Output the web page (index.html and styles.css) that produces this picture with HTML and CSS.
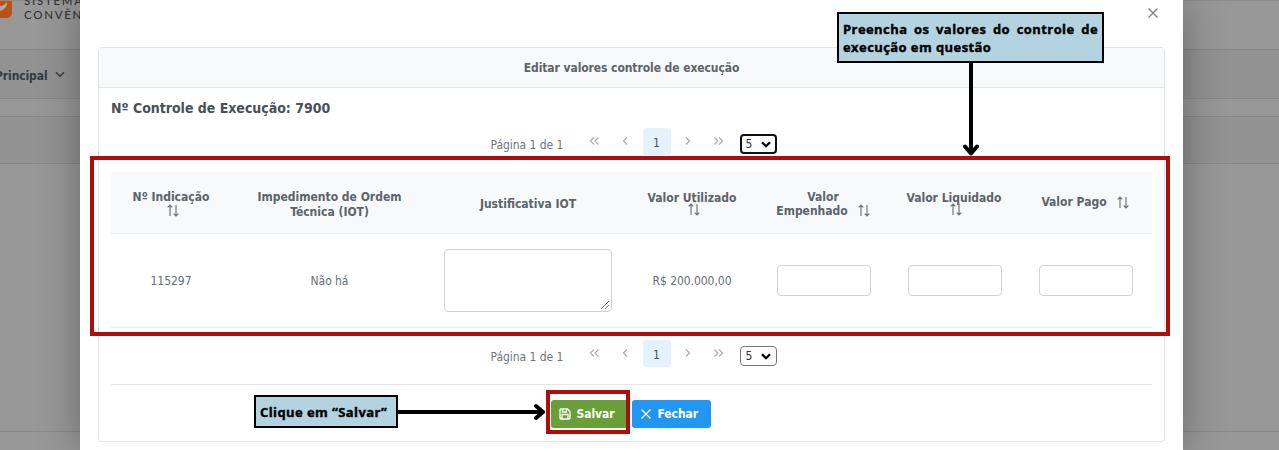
FILE: index.html
```html
<!DOCTYPE html>
<html lang="pt-BR">
<head>
<meta charset="utf-8">
<title>Editar valores controle de execução</title>
<link rel="stylesheet" href="styles.css">
</head>
<body>
<svg class="defs" aria-hidden="true">
  <symbol id="sort" viewBox="0 0 12 13"><path d="M3 12V1M.7 3.3 3 1l2.3 2.3M9 1v11M6.7 9.7 9 12l2.3-2.3"/></symbol>
  <symbol id="left" viewBox="0 0 6 8"><path d="M5 .5 1.500 4 5 7.500"/></symbol>
  <symbol id="right" viewBox="0 0 6 8"><path d="M1 .5 4.500 4 1 7.500"/></symbol>
  <symbol id="first" viewBox="0 0 11 8"><path d="M5 .5 1.500 4 5 7.500M9.500 .5 6 4l3.500 3.500"/></symbol>
  <symbol id="last" viewBox="0 0 11 8"><path d="M1.500 .5 5 4 1.500 7.500M6 .5 9.500 4 6 7.500"/></symbol>
  <symbol id="caret" viewBox="0 0 10 7"><path d="m1 1.300 4 4 4-4"/></symbol>
  <symbol id="cross" viewBox="0 0 12 12"><path d="m1.500 1.500 9 9m0-9-9 9"/></symbol>
</svg>

<div class="page">
  <header class="brand">
    <svg class="logo" viewBox="0 0 12 19"><path fill="#bd5014" d="M0 0h12v12a5 5 0 0 1-5 5H0z"/><path fill="#aaa" d="M0 5C3 5 5 3 7 1c1 4-3 8-7 9z"/></svg>
    <div class="brand-name"><div>SISTEMA</div><div>CONVÊNIOS</div></div>
  </header>
  <nav class="menubar"><span class="menu-label">Principal</span><svg class="menu-caret"><use href="#caret"/></svg></nav>
  <section class="panel"><div class="panel-head"></div><div class="panel-body"></div></section>
</div>

<main class="dialog">
  <div class="dialog-top"><svg class="close"><use href="#cross"/></svg></div>
  <section class="card">
    <h1 class="card-head">Editar valores controle de execução</h1>
    <div class="card-body">
      <h2 class="control">Nº Controle de Execução: 7900</h2>
      <div class="pager">
        <span class="pages">Página 1 de 1</span>
        <svg class="double"><use href="#first"/></svg><svg class="single prev"><use href="#left"/></svg>
        <span class="current">1</span>
        <svg class="single next"><use href="#right"/></svg><svg class="double"><use href="#last"/></svg>
        <span class="size focused">5<svg><use href="#caret"/></svg></span>
      </div>
      <div class="row head">
        <div class="th">Nº Indicação<svg class="sort under"><use href="#sort"/></svg></div>
        <div class="th two">Impedimento de Ordem<br>Técnica (IOT)</div>
        <div class="th just">Justificativa IOT</div>
        <div class="th">Valor Utilizado<svg class="sort under tight"><use href="#sort"/></svg></div>
        <div class="th stacked"><div>Valor</div><div class="beside"><span>Empenhado</span><svg class="sort"><use href="#sort"/></svg></div></div>
        <div class="th">Valor Liquidado<svg class="sort under tight"><use href="#sort"/></svg></div>
        <div class="th"><div class="beside pago"><span>Valor Pago</span><svg class="sort"><use href="#sort"/></svg></div></div>
      </div>
      <div class="row data">
        <div>115297</div>
        <div>Não há</div>
        <div class="area-cell"><div class="area"><svg viewBox="0 0 10 10"><path d="M1 9 9 1M5 9l4-4"/></svg></div></div>
        <div class="money">R$ 200.000,00</div>
        <div><input class="field" type="text"></div>
        <div><input class="field" type="text"></div>
        <div><input class="field" type="text"></div>
      </div>
      <div class="pager bottom">
        <span class="pages">Página 1 de 1</span>
        <svg class="double"><use href="#first"/></svg><svg class="single prev"><use href="#left"/></svg>
        <span class="current">1</span>
        <svg class="single next"><use href="#right"/></svg><svg class="double"><use href="#last"/></svg>
        <span class="size">5<svg><use href="#caret"/></svg></span>
      </div>
      <footer class="actions">
        <button class="btn save"><svg viewBox="0 0 12 12"><path d="M1 2q0-1 1-1h6.500L11 3.500V10q0 1-1 1H2q-1 0-1-1zM3.500 1v3h4V1M3 11V6.500h6V11"/></svg>Salvar</button>
        <button class="btn shut"><svg><use href="#cross"/></svg>Fechar</button>
      </footer>
    </div>
  </section>
</main>

<div class="frame frame-table"></div>
<div class="frame frame-save"></div>
<div class="note note-values"><div class="spread">Preencha os valores do controle de</div><div>execução em questão</div></div>
<div class="note note-save">Clique em “Salvar”</div>
<svg class="arrow arrow-down" viewBox="0 0 18 95"><path d="M9 0v91M3 84.500l6 7 6-7"/></svg>
<svg class="arrow arrow-right" viewBox="0 0 149 18"><path d="M0 9h145M138 3l7 6-7 6"/></svg>
</body>
</html>
```
FILE: styles.css
```css
* { box-sizing: border-box; }
html { overflow: hidden; }
body {
  margin: 0; width: 1279px; height: 450px; overflow: hidden; position: relative;
  font: 12px/15px "DejaVu Sans Condensed", "DejaVu Sans", sans-serif; font-stretch: condensed;
  letter-spacing: -.05px; color: #666d74; background: #989898;
}
svg { fill: none; stroke: currentColor; flex: none; }
.defs { display: none; }

.page { height: 450px; }
.brand { height: 49px; display: flex; border-top: 1px solid #8b8b8b; }
.logo { width: 12px; height: 19px; stroke: none; }
.brand-name { margin: -7px 0 0 12px; font: 500 11.5px/14px Lato, sans-serif; letter-spacing: 1.7px; color: #333; }
.menubar {
  height: 50px; display: flex; align-items: center; border: 1px solid #858788; border-width: 1px 0;
  background: #929292; color: #343a40; font-weight: 700; padding-top: 4px;
}
.menu-label { margin-left: -5px; width: 53px; letter-spacing: -.1px; }
.menu-caret { width: 10px; height: 7px; margin: -3px 0 0 7px; stroke-width: 1.3; }
.panel { margin-top: 17px; height: 316px; border: 1px solid #82878b; border-width: 1px 0; }
.panel-head { height: 47px; background: #929292; border-bottom: 1px solid #858788; }

.dialog {
  position: absolute; left: 80px; top: 0; width: 1103px; height: 450px; padding: 0 18px;
  background: #fff; box-shadow: 0 0 40px rgba(0,0,0,.32);
}
.dialog-top { height: 47px; display: flex; justify-content: flex-end; padding: 7px 6px 0 0; color: #7b848d; }
.close { width: 12px; height: 12px; stroke-width: 1.4; }
.card { height: 395px; border: 1px solid #e1e6ea; border-radius: 4px; }
.card-head {
  margin: 0; height: 40px; padding-top: 2px; display: flex; align-items: center; justify-content: center;
  background: #f8f9fa; border-bottom: 1px solid #e1e6ea; font-size: 12px; font-weight: 700; letter-spacing: -.08px; color: #5c6369;
}
.card-body { padding: 11px 12px 0 12px; }
.control { margin: 0; height: 29px; font-size: 14px; line-height: 18px; font-weight: 700; letter-spacing: -.02px; color: #495057; }

.pager { height: 44px; display: flex; justify-content: center; align-items: flex-start; color: #6c757d; padding-left: 5px; }
.pager > svg { color: #a6abb0; margin-top: 9px; height: 8px; stroke-width: 1.2; }
.pages { width: 74px; margin: 10px 24px 0 0; white-space: nowrap; }
.double { width: 11px; }
.single { width: 6px; }
.prev { margin: 0 15px 0 22px; }
.next { margin: 0 22px 0 14px; }
.current { width: 28px; height: 27px; border-radius: 3px; background: #e3f2fd; color: #495057; text-align: center; line-height: 30px; }
.size {
  width: 37px; height: 20px; margin: 6px 1px 0 16px; padding: 0 5px; display: flex; align-items: center; justify-content: space-between;
  border: 1px solid #767676; border-radius: 4px; color: #333; line-height: 21px;
}
.size svg { width: 10px; height: 7px; color: #000; stroke-width: 2.2; }
.focused { border: 2px solid #111; padding: 0 4px; }

.row { display: grid; grid-template-columns: 120px 197px 200px 128px 134px 128px 134px; align-items: center; text-align: center; border-bottom: 1px solid #e9ecef; }
.head { height: 62px; padding-top: 2px; background: #f8f9fa; font-weight: 700; letter-spacing: 0; color: #5c6369; }
.th { display: flex; flex-direction: column; align-items: center; white-space: nowrap; }
.two { display: block; padding-top: 2px; }
.just { padding-top: 2px; }
.stacked { line-height: 14px; }
.beside { display: flex; align-items: center; gap: 10px; height: 13px; }
.pago { margin-top: -2px; }
.sort { width: 12px; height: 13px; stroke-width: 1.15; color: #6c757d; }
.under { margin-left: 4px; margin-top: -1px; }
.tight { margin-top: -3px; }
.data { height: 94px; line-height: 17px; }
.data > div:not(:has(*)) { padding-top: 2px; }
.area-cell { padding-left: 16px; }
.area { width: 168px; height: 63px; border: 1px solid #ced4da; border-radius: 4px; display: flex; align-items: flex-end; justify-content: flex-end; padding: 1px; }
.area svg { width: 10px; height: 10px; stroke: #777; }
.field { display: block; margin: 0 0 0 21px; width: 94px; height: 31px; border: 1px solid #ced4da; border-radius: 4px; background: #fff; }
.row > :nth-child(6) .field { margin-left: 18px; }
.bottom { height: 44px; margin-top: 12px; }
.actions { border-top: 1px solid #e3e7eb; height: 56px; padding: 15px 2px 0 0; display: flex; justify-content: center; gap: 4px; }
.btn { height: 28px; border: 0; border-radius: 3px; color: #fff; font: inherit; font-weight: 700; letter-spacing: -.05px; display: flex; align-items: center; gap: 6px; padding: 0 8px; }
.btn svg { width: 12px; height: 12px; stroke-width: 1.3; }
.save { width: 77px; background: #689f38; }
.shut { width: 79px; background: #2196f3; }

.frame { position: absolute; border: 4px solid #b10c0c; }
.frame-table { left: 90px; top: 156px; width: 1080px; height: 180px; }
.frame-save { left: 546px; top: 390px; width: 84px; height: 44px; }
.note { position: absolute; border: 2px solid #000; background: #b2d3df; color: #000; font: 700 13px/18px "Open Sans", sans-serif; letter-spacing: .42px; -webkit-text-stroke: .4px #000; white-space: nowrap; }
.note-values { left: 837px; top: 12px; width: 267px; height: 51px; padding: 6px 4px; }
.spread { text-align: justify; text-align-last: justify; }
.note-save { left: 254px; top: 395px; width: 144px; height: 33px; padding: 6px 4px; }
.arrow { position: absolute; color: #000; stroke-width: 4; stroke-linecap: round; stroke-linejoin: round; }
.arrow-down { left: 962px; top: 62px; width: 18px; height: 95px; }
.arrow-right { left: 398px; top: 403px; width: 149px; height: 18px; }
```
